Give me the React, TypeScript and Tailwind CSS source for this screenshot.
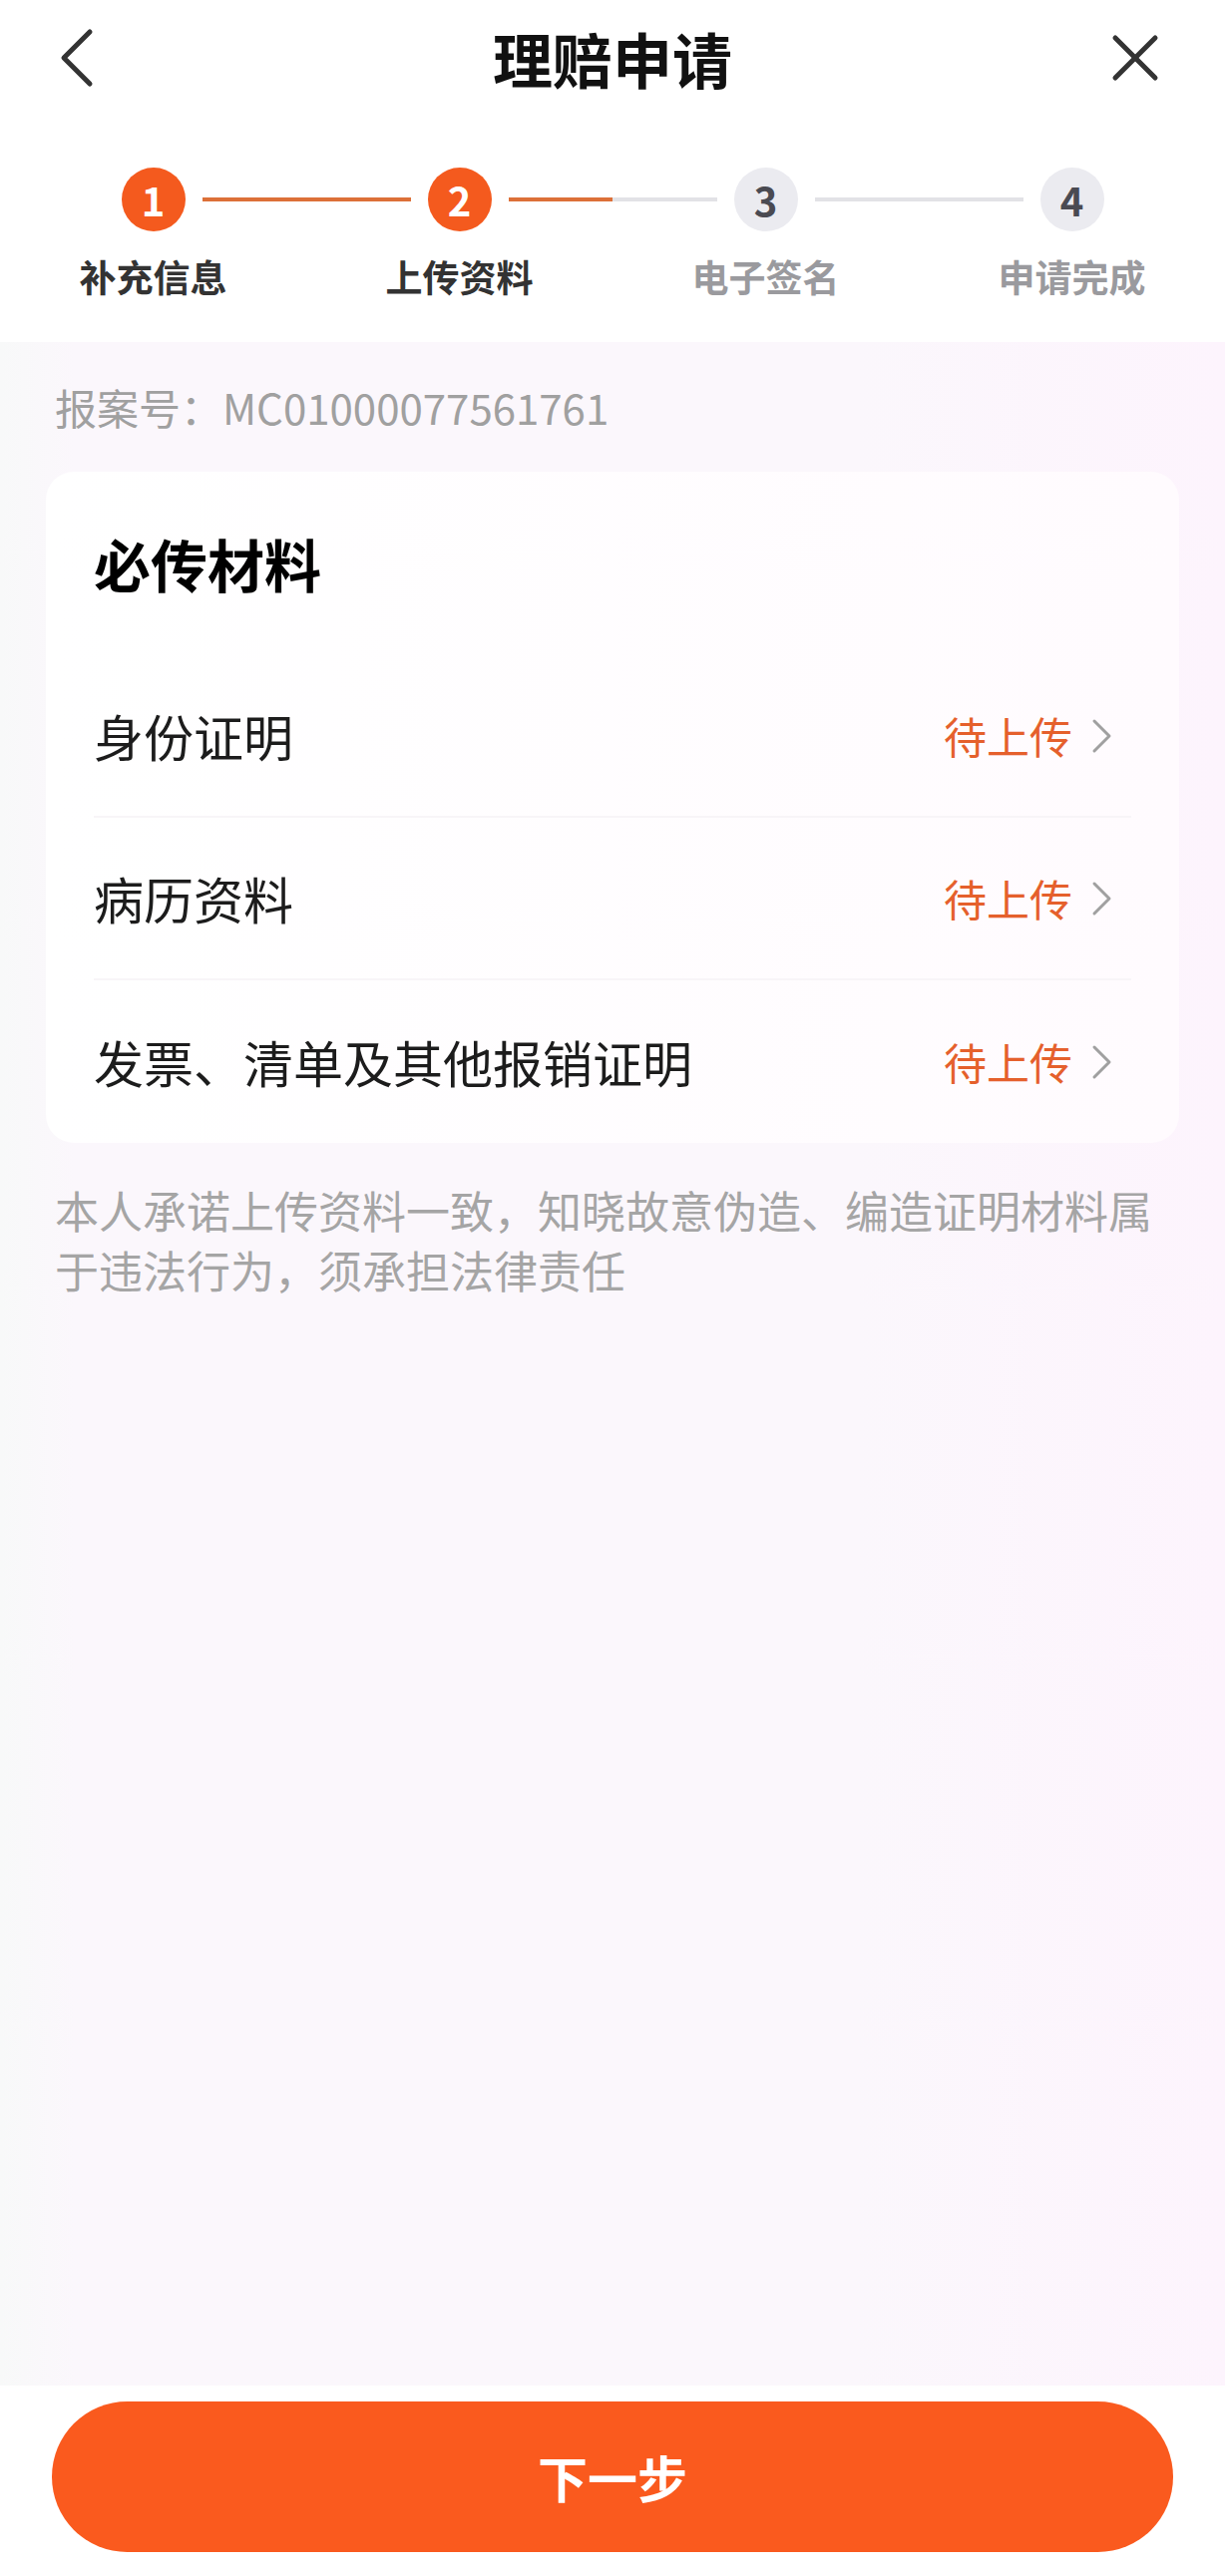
import React from 'react';

const font = { fontFamily: '"Noto Sans CJK SC", "Noto Sans", sans-serif' };

const steps = [
    { n: 1, label: '补充信息', done: true },
    { n: 2, label: '上传资料', done: true },
    { n: 3, label: '电子签名', done: false },
    { n: 4, label: '申请完成', done: false },
];

const docs = ['身份证明', '病历资料', '发票、清单及其他报销证明'];

function StepBar() {
    return (
        <div className="grid grid-cols-4 pt-[52px] pb-[44px]">
            {steps.map((s, i) => {
                const on = i <= 1;
                return (
                    <div key={s.n} className="flex flex-col items-center">
                        <div className="flex w-full items-center h-[64px]">
                            <div
                                className={
                                    i === 0
                                        ? 'flex-1 h-[4px]'
                                        : on
                                        ? 'flex-1 h-[4px] bg-[#dc7038]'
                                        : 'flex-1 h-[4px] bg-[#e2e2e6]'
                                }
                            />
                            <div
                                className={
                                    s.done
                                        ? 'mx-[17px] w-[64px] h-[64px] rounded-full bg-[#f45a1e] text-white flex items-center justify-center text-[40px] font-bold'
                                        : 'mx-[17px] w-[64px] h-[64px] rounded-full bg-[#ebebf0] text-[#4a4a52] flex items-center justify-center text-[40px] font-bold'
                                }
                            >
                                {s.n}
                            </div>
                            <div
                                className={
                                    i === 3
                                        ? 'flex-1 h-[4px]'
                                        : on
                                        ? 'flex-1 h-[4px] bg-[#dc7038]'
                                        : 'flex-1 h-[4px] bg-[#e2e2e6]'
                                }
                            />
                        </div>
                        <div
                            className={
                                s.done
                                    ? 'mt-[23px] text-[37px] leading-[44px] font-bold text-[#333333]'
                                    : 'mt-[23px] text-[37px] leading-[44px] font-bold text-[#9a9a9e]'
                            }
                        >
                            {s.label}
                        </div>
                    </div>
                );
            })}
        </div>
    );
}

export default function App() {
    return (
        <div style={font} className="min-h-screen flex flex-col bg-[linear-gradient(to_right,#f8f9f9,#fbf7fc_6%,#fbf7fc_70%,#fdf4fd)]">
            <header className="bg-white">
                <div className="flex items-center h-[116px]">
                    <div className="w-[150px] pl-[58px] flex items-center">
                        <svg width="40" height="62" viewBox="0 0 40 62" fill="none">
                            <polyline points="32,5 6,31 32,57" stroke="#333333" strokeWidth="5" strokeLinecap="round" strokeLinejoin="round" />
                        </svg>
                    </div>
                    <h1 className="flex-1 text-center text-[60px] leading-[72px] font-bold text-[#111111]">理赔申请</h1>
                    <div className="w-[150px] pr-[62px] flex items-center justify-end">
                        <svg width="56" height="56" viewBox="0 0 56 56" fill="none">
                            <line x1="8" y1="8" x2="48" y2="48" stroke="#333333" strokeWidth="5" strokeLinecap="round" />
                            <line x1="48" y1="8" x2="8" y2="48" stroke="#333333" strokeWidth="5" strokeLinecap="round" />
                        </svg>
                    </div>
                </div>
                <StepBar />
            </header>

            <main className="flex-1 px-[46px]">
                <div className="px-[9px] pt-[37px] pb-[37px] text-[42px] leading-[56px] text-[#a0a0a0]">
                    报案号：MC01000077561761
                </div>

                <div className="rounded-[28px] bg-gradient-to-r from-white to-[#fffbfe]">
                    <div className="h-[184px] flex items-center px-[48px] text-[57px] font-bold text-black">必传材料</div>
                    <div className="px-[48px]">
                        {docs.map((d, i) => (
                            <div
                                key={d}
                                className={
                                    i < docs.length - 1
                                        ? 'h-[163px] flex items-center border-b-2 border-[#f8f5f8]'
                                        : 'h-[163px] flex items-center'
                                }
                            >
                                <span className="flex-1 text-[50px] text-[#1c1c1c]">{d}</span>
                                <span className="text-[43px] text-[#e5602c]">待上传</span>
                                <svg className="ml-[19px] mr-[18px]" width="22" height="36" viewBox="0 0 22 36" fill="none">
                                    <polyline points="3,3 18,18 3,33" stroke="#a0a0a0" strokeWidth="3" strokeLinecap="round" strokeLinejoin="round" />
                                </svg>
                            </div>
                        ))}
                    </div>
                </div>

                <p className="px-[9px] mt-[37px] text-[44px] leading-[60px] text-[#a5a5a5]">
                    本人承诺上传资料一致，知晓故意伪造、编造证明材料属于违法行为，须承担法律责任
                </p>
            </main>

            <footer className="bg-white pt-[16px] pb-[24px] px-[52px]">
                <button className="w-full h-[151px] rounded-full bg-[#fa5a1e] text-white text-[50px] font-bold">下一步</button>
            </footer>
        </div>
    );
}
